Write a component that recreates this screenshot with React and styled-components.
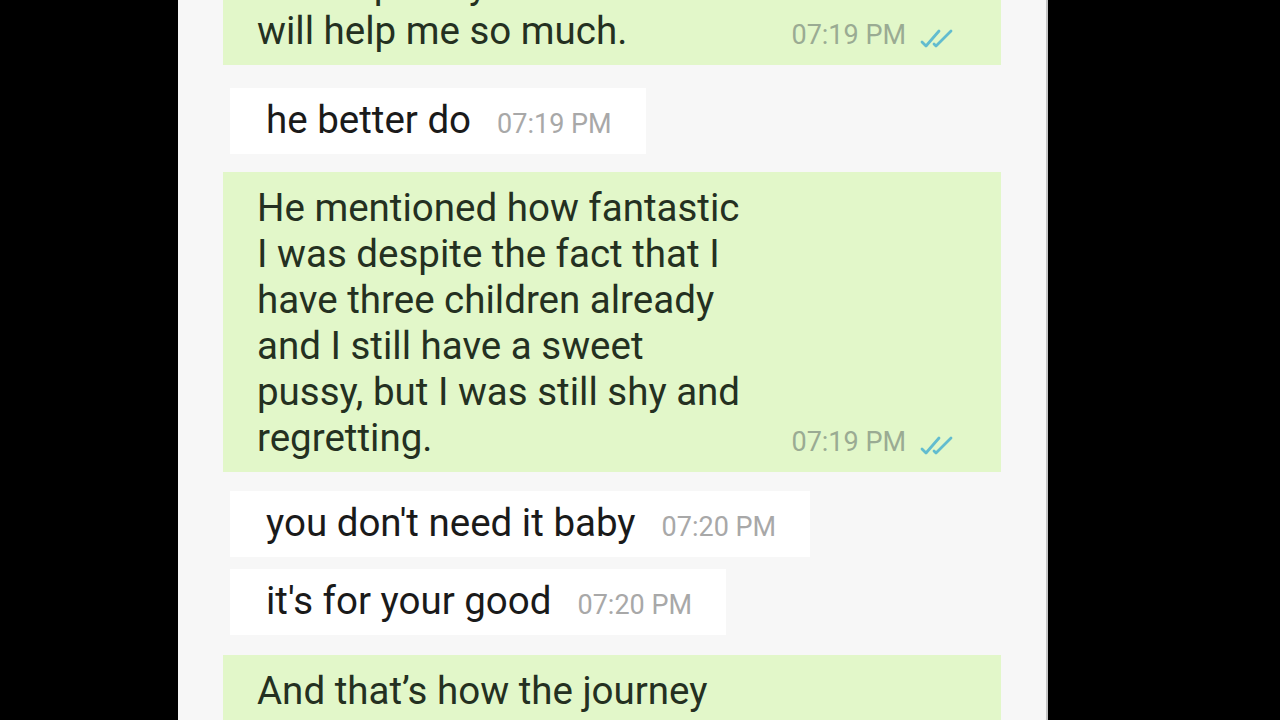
import React from "react";
import styled, { createGlobalStyle } from "styled-components";

const Global = createGlobalStyle`
  html, body { margin: 0; padding: 0; background: #000; overflow: hidden; }
  #root { height: 720px; }
`;

const Page = styled.div`
  display: flex;
  height: 720px;
  padding-left: 178px;
  background: #000;
  box-sizing: border-box;
`;

const Panel = styled.div`
  width: 870px;
  height: 720px;
  background: #f7f7f7;
  display: flex;
  flex-direction: column;
  align-items: flex-start;
  overflow: hidden;
  border-right: 2px solid #c4c4c4;
  box-sizing: border-box;
`;

const Bubble = styled.div`
  flex: none;
  display: flex;
  align-items: last baseline;
  box-sizing: border-box;
  margin-top: ${(p) => p.$space}px;
  font-family: Roboto, "Liberation Sans", sans-serif;
  ${(p) =>
    p.$mine
      ? `
    background: #e2f7c9;
    margin-left: 45px;
    width: 778px;
    padding: 13px 43px 11px 34px;
    color: #243021;
  `
      : `
    background: #ffffff;
    margin-left: 52px;
    padding: 9px 34px 11px 36px;
    color: #1a1a1a;
  `}
`;

const Text = styled.div`
  font-size: 38.5px;
  line-height: 46px;
  white-space: nowrap;
`;

const Line = styled.div`
  display: block;
`;

const Meta = styled.div`
  display: flex;
  align-items: baseline;
  gap: 12px;
  margin-left: ${(p) => (p.$mine ? "auto" : "26px")};
  font-family: Roboto, "Liberation Sans", sans-serif;
  font-size: 27px;
  line-height: 1;
  color: ${(p) => (p.$mine ? "#9aab93" : "#a8a8a8")};
  white-space: nowrap;
`;

const Ticks = styled.svg`
  width: 40px;
  height: 20px;
  flex: none;
  align-self: center;
  position: relative;
  top: 3px;
`;

const DoubleCheck = () => (
  <Ticks viewBox="0 0 40 20">
    <g fill="none" stroke="#62bccf" strokeWidth="2.8" strokeLinecap="round" strokeLinejoin="round">
      <path d="M4 13 L8 17 L21 2" />
      <path d="M16 15 L18 17 L33 2" />
    </g>
  </Ticks>
);

const messages = [
  { mine: true, space: -51, lines: ["and hopefully it", "will help me so much."], time: "07:19 PM" },
  { mine: false, space: 23, lines: ["he better do"], time: "07:19 PM" },
  {
    mine: true,
    space: 18,
    lines: [
      "He mentioned how fantastic",
      "I was despite the fact that I",
      "have three children already",
      "and I still have a sweet",
      "pussy, but I was still shy and",
      "regretting.",
    ],
    time: "07:19 PM",
  },
  { mine: false, space: 19, lines: ["you don't need it baby"], time: "07:20 PM" },
  { mine: false, space: 12, lines: ["it's for your good"], time: "07:20 PM" },
  { mine: true, space: 20, lines: ["And that’s how the journey", "of us began."], time: "07:21 PM" },
];

export default function App() {
  return (
    <>
      <Global />
      <Page>
        <Panel>
          {messages.map((m, i) => (
            <Bubble key={i} $mine={m.mine} $space={m.space}>
              <Text>
                {m.lines.map((l, j) => (
                  <Line key={j}>{l}</Line>
                ))}
              </Text>
              <Meta $mine={m.mine}>
                <span>{m.time}</span>
                {m.mine && <DoubleCheck />}
              </Meta>
            </Bubble>
          ))}
        </Panel>
      </Page>
    </>
  );
}
